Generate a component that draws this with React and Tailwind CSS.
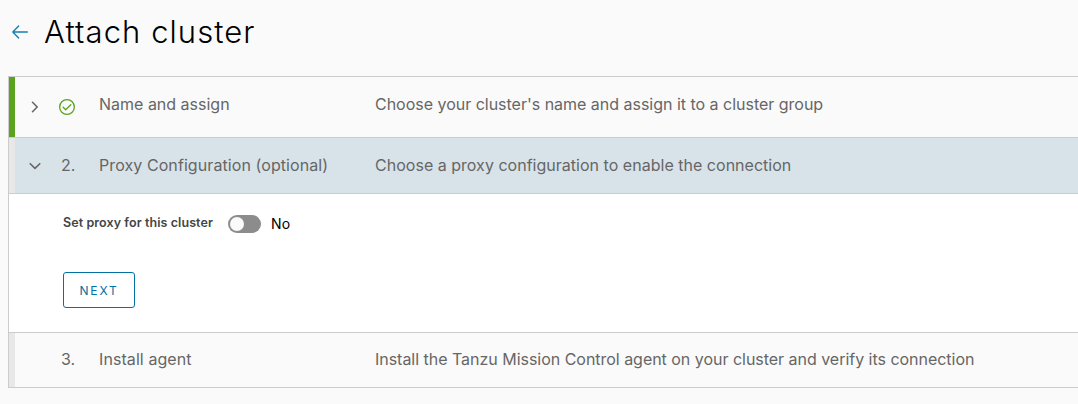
const INK = 'text-[#666666]';

function Chevron({ open }) {
  return (
    <svg className="h-4 w-4 shrink-0" viewBox="0 0 16 16" fill="none" stroke="#666666" strokeWidth="1.6" strokeLinecap="round" strokeLinejoin="round">
      {open ? <path d="M3.2 5.7 8 10.4l4.8-4.7" /> : <path d="M5.5 3.3 10.2 8l-4.7 4.7" />}
    </svg>
  );
}

function CheckCircle() {
  return (
    <svg className="h-4 w-4" viewBox="0 0 16 16" fill="none" stroke="#5aa220" strokeWidth="1.3" strokeLinecap="round" strokeLinejoin="round">
      <circle cx="8" cy="8" r="7.35" />
      <path d="m4.2 8.3 2.5 2.5 5.1-5.1" />
    </svg>
  );
}

function StepHeader({ height, strip, background = '', icon, marker, title, titleClass, description, descriptionClass }) {
  return (
    <div className={`flex items-stretch ${height} ${background}`}>
      <div className={`w-1.5 shrink-0 ${strip}`} />
      <div className={`flex flex-1 items-center pl-3 text-base leading-6 whitespace-nowrap ${INK}`}>
        <div className="w-8.5 shrink-0">{icon}</div>
        <div className="w-[38px] shrink-0">{marker}</div>
        <div className="w-69 shrink-0"><span className={titleClass}>{title}</span></div>
        <div><span className={descriptionClass}>{description}</span></div>
      </div>
    </div>
  );
}

export default function App() {
  return (
    <div className="h-[404px] w-full overflow-hidden bg-[#fafafa] pl-2 font-['Inter',sans-serif]">
      <header className="flex h-[76px] items-start pt-3 pl-1">
        <svg className="mt-3 h-4 w-4 shrink-0" viewBox="0 0 16 16" fill="none" stroke="#1580ad" strokeWidth="1.4" strokeLinecap="round" strokeLinejoin="round">
          <path d="M15.3 8H.8M6.6 2.1.8 8l5.8 5.9" />
        </svg>
        <h1 className="ml-4 text-[31px] leading-10 font-light tracking-[1.06px] whitespace-nowrap text-black">Attach cluster</h1>
      </header>

      <main className="border-y border-l border-[#cccccc]">
        <StepHeader
          height="h-15"
          strip="bg-[#5aa220]"
          icon={<div className="pb-px"><Chevron /></div>}
          marker={<div className="-ml-0.5 pb-px"><CheckCircle /></div>}
          title="Name and assign"
          titleClass="block pb-1.5"
          description="Choose your cluster's name and assign it to a cluster group"
          descriptionClass="block pb-1.5 tracking-[-0.015px]"
        />
        <section className="border-y border-[#cccccc] bg-white">
          <StepHeader
            height="h-[55px]"
            strip="bg-[#e8e8e8]"
            background="bg-[#d8e3e9]"
            icon={<Chevron open />}
            marker={<span className="block pb-0.5">2.</span>}
            title="Proxy Configuration (optional)"
            titleClass="block pb-0.5 tracking-[0.08px]"
            description="Choose a proxy configuration to enable the connection"
            descriptionClass="block pb-0.5 tracking-[0.02px]"
          />
          <div className="h-[139px] border-t border-[#cccccc] pt-[21px] pl-[54px]">
            <div className="flex h-[18px] items-center">
              <span className="w-[165px] shrink-0 pb-px text-[12.5px] font-semibold tracking-[0.08px] whitespace-nowrap text-[#454545]">Set proxy for this cluster</span>
              <button className="flex h-[18px] w-[33px] items-center rounded-full bg-[#8c8c8c] p-0.5" role="switch" aria-checked="false" aria-label="Set proxy for this cluster">
                <span className="h-3.5 w-3.5 rounded-full bg-[#fafafa]" />
              </button>
              <span className="ml-2.5 pb-px text-sm tracking-[0.2px] text-black">No</span>
            </div>
            <button className="mt-[39px] flex h-9 w-18 items-center justify-center rounded-[3px] border border-[#0072a3] pt-0.5 text-xs tracking-[1.8px] text-[#0072a3]">NEXT</button>
          </div>
        </section>
        <StepHeader
          height="h-[54px]"
          strip="bg-[#e8e8e8]"
          marker={<span className="block pb-0.5">3.</span>}
          title="Install agent"
          titleClass="block pb-0.5 tracking-[0.08px]"
          description="Install the Tanzu Mission Control agent on your cluster and verify its connection"
          descriptionClass="block pb-0.5 tracking-[-0.025px]"
        />
      </main>
    </div>
  );
}
